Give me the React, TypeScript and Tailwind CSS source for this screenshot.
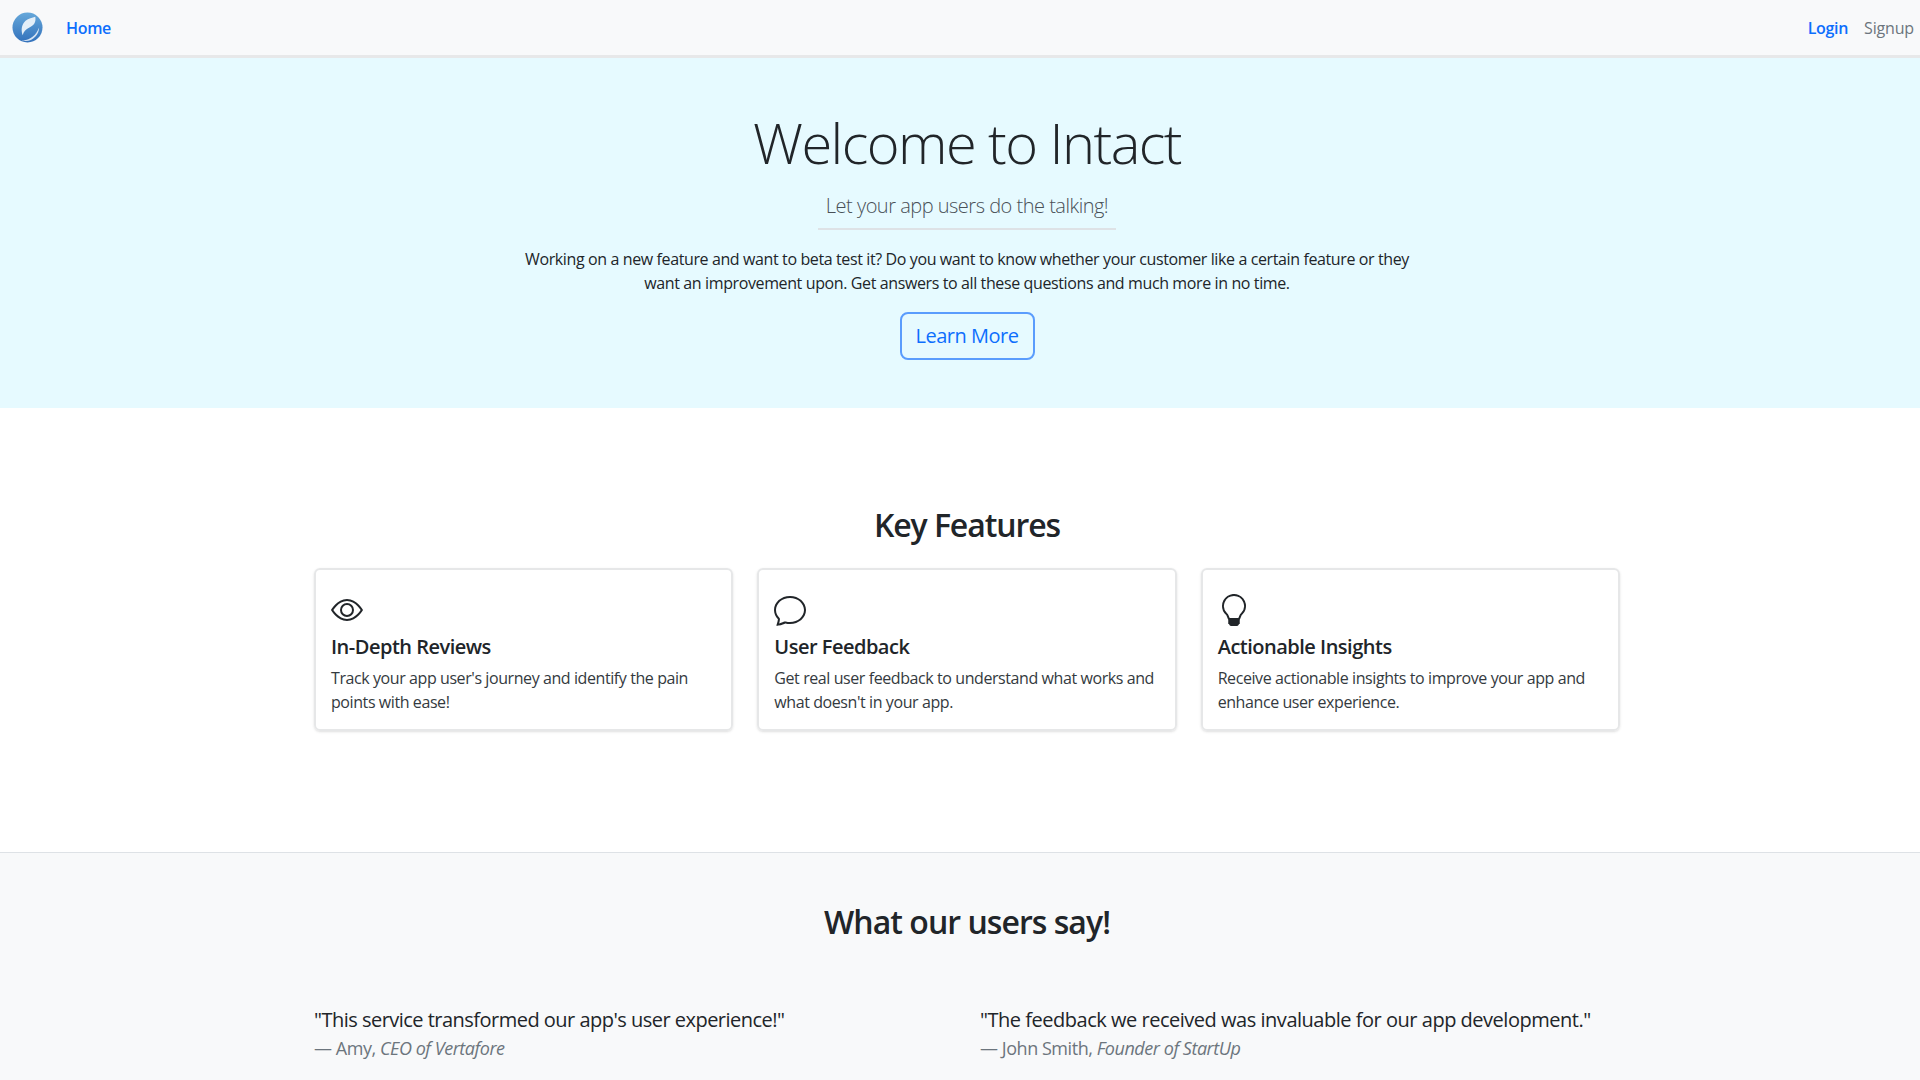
import { BsChat, BsEye, BsLightbulb } from "react-icons/bs";

const FEATURES = [
  {
    icon: <BsEye size={32} />,
    title: "In-Depth Reviews",
    lines: ["Track your app user's journey and identify the pain", "points with ease!"],
  },
  {
    icon: <BsChat size={32} />,
    title: "User Feedback",
    lines: ["Get real user feedback to understand what works and", "what doesn't in your app."],
  },
  {
    icon: <BsLightbulb size={32} />,
    title: "Actionable Insights",
    lines: ["Receive actionable insights to improve your app and", "enhance user experience."],
  },
];

function Logo() {
  return (
    <svg width="31" height="31" viewBox="0 0 32 32">
      <defs>
        <linearGradient id="logo-blue" x1="0" y1="0" x2="0" y2="1">
          <stop offset="0" stopColor="#66a8da" />
          <stop offset="1" stopColor="#3271bb" />
        </linearGradient>
      </defs>
      <circle cx="16" cy="16" r="15.5" fill="url(#logo-blue)" />
      <path d="M24 5c1 5-1 9-6 11-4 2-6 4-7 8-2-6-1-11 3-15 3-2 7-3 10-4z" fill="#e4eff8" />
      <path d="M28 16c0 7-6 14-14 14-2 0-3-1-4-1 8 1 15-5 18-13z" fill="#d5e3f2" />
    </svg>
  );
}

export default function App() {
  return (
    <div className="h-screen overflow-hidden bg-white text-[#212529] font-['Open_Sans','Noto_Sans',sans-serif] tracking-[-0.02em]">
      <nav className="h-[58px] flex items-center justify-between pl-[12px] pr-[6px] bg-[#f8f9fa] border-b-[3px] border-[#e7e8e9]">
        <div className="flex items-center gap-[23px]">
          <Logo />
          <a className="text-[16px] font-semibold text-[#0d6efd]">Home</a>
        </div>
        <div className="flex items-center gap-4 text-[16px]">
          <a className="font-semibold text-[#0d6efd]">Login</a>
          <a className="text-[#6c757d] tracking-[-0.01em]">Signup</a>
        </div>
      </nav>

      <section className="h-[350px] pl-[14px] pt-[51px] bg-[#e6faff] flex flex-col items-center text-center">
        <h1 className="text-[56px] leading-[67px] font-light tracking-[-0.028em]">Welcome to Intact</h1>
        <p className="mt-[15px] pb-[7px] w-[298px] whitespace-nowrap text-[20px] leading-[30px] font-light tracking-[-0.025em] text-[#495057] border-b-2 border-[#dee2e6]">
          Let your app users do the talking!
        </p>
        <p className="mt-[17px] text-[16px] leading-[24px] tracking-[-0.024em]">
          Working on a new feature and want to beta test it? Do you want to know whether your customer like a certain feature or they
          <br />
          want an improvement upon. Get answers to all these questions and much more in no time.
        </p>
        <button className="mt-[17px] w-[135px] h-[48px] rounded-lg border-2 border-[#5a9cfd] text-[20px] text-[#0d6efd] tracking-[-0.025em]">
          Learn More
        </button>
      </section>

      <section className="h-[444px] pl-[14px] pt-[93px] flex flex-col items-center">
        <h2 className="text-[32px] leading-[48px] font-semibold tracking-[-0.034em]">Key Features</h2>
        <div className="mt-[19px] w-[1306px] grid grid-cols-3 gap-[24px]">
          {FEATURES.map((f) => (
            <div key={f.title} className="h-[163px] px-[15px] pt-[24px] rounded-md border-2 border-[#e6e7e8] shadow-sm">
              <div className="h-[41px] flex items-start">{f.icon}</div>
              <h3 className="text-[20px] leading-[24px] font-semibold tracking-[-0.025em]">{f.title}</h3>
              <p className="mt-[7px] text-[16px] leading-[24px] text-[#343a40] tracking-[-0.026em]">
                {f.lines[0]}
                <br />
                {f.lines[1]}
              </p>
            </div>
          ))}
        </div>
      </section>

      <section className="h-[300px] pt-[45px] pl-[14px] bg-[#f8f9fa] border-t border-[#dee2e6] flex flex-col items-center">
        <h2 className="text-[32px] leading-[48px] font-semibold tracking-[-0.03em]">What our users say!</h2>
        <div className="mt-[59px] w-[1306px] grid grid-cols-2">
          <div>
            <p className="text-[20px] leading-[30px] tracking-[-0.026em]">"This service transformed our app's user experience!"</p>
            <p className="mt-[1px] text-[18px] leading-[24px] text-[#6c757d] tracking-[-0.025em]">
              — Amy, <em>CEO of Vertafore</em>
            </p>
          </div>
          <div className="pl-[13px]">
            <p className="text-[20px] leading-[30px] tracking-[-0.024em]">"The feedback we received was invaluable for our app development."</p>
            <p className="mt-[1px] text-[18px] leading-[24px] text-[#6c757d] tracking-[-0.025em]">
              — John Smith, <em>Founder of StartUp</em>
            </p>
          </div>
        </div>
      </section>
    </div>
  );
}
